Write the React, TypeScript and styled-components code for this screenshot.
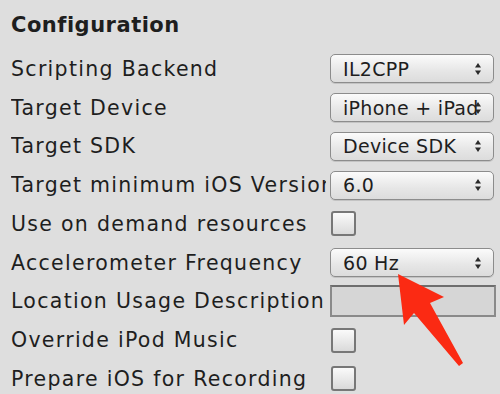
import styled, { createGlobalStyle } from "styled-components";

const GlobalStyle = createGlobalStyle`
  html, body {
    margin: 0;
    padding: 0;
    background: #dedede;
  }
  body {
    font-family: "DejaVu Sans", "Liberation Sans", sans-serif;
    color: #1e1e1e;
  }
`;

const Panel = styled.div`
  position: relative;
  width: 500px;
  height: 394px;
  overflow: hidden;
  background: #dedede;
  padding-left: 11px;
  box-sizing: border-box;
`;

const Heading = styled.div`
  height: 49.5px;
  display: flex;
  align-items: center;
  font-size: 21px;
  font-weight: bold;
  letter-spacing: 0.5px;
  padding-top: 1px;
  box-sizing: border-box;
`;

const Row = styled.div`
  height: 38.75px;
  display: grid;
  grid-template-columns: 315px 1fr;
  column-gap: 4px;
  align-items: center;
  padding-right: 6px;
`;

const Label = styled.div`
  font-size: 20.5px;
  white-space: nowrap;
  overflow: hidden;
  letter-spacing: 1.3px;
`;

const Popup = styled.div`
  position: relative;
  height: 29px;
  box-sizing: border-box;
  border: 1px solid #8c8c8c;
  border-radius: 5px;
  background: linear-gradient(#fbfbfb, #e6e6e6 60%, #dcdcdc);
  box-shadow: 0 1px 0 rgba(0, 0, 0, 0.12);
  display: flex;
  align-items: center;
  padding: 0 24px 0 12px;
  font-size: 19px;
  letter-spacing: 0.3px;
  white-space: nowrap;
  overflow: hidden;
`;

const Stepper = styled.svg`
  position: absolute;
  right: 11px;
  top: 50%;
  margin-top: -7px;
`;

const Check = styled.div`
  width: 25px;
  height: 25px;
  box-sizing: border-box;
  margin-left: 1px;
  border: 2px solid #777;
  border-radius: 3px;
  background: linear-gradient(#fafafa, #dadada);
`;

const TextField = styled.div`
  height: 32px;
  box-sizing: border-box;
  border: 2px solid #8a8a8a;
  border-top-color: #6e6e6e;
  background: #d6d6d6;
  margin-right: -2px;
`;

const Arrow = styled.svg`
  position: absolute;
  left: 0;
  top: 0;
  pointer-events: none;
`;

const Select = ({ value }: { value: string }) => (
  <Popup>
    {value}
    <Stepper width="8" height="14" viewBox="0 0 8 14">
      <path d="M4 1 L7 5.5 L1 5.5 Z" fill="#2a2a2a" />
      <path d="M4 13 L7 8.5 L1 8.5 Z" fill="#2a2a2a" />
    </Stepper>
  </Popup>
);

const App = () => {
  return (
    <>
      <GlobalStyle />
      <Panel>
        <Heading>Configuration</Heading>
        <Row>
          <Label>Scripting Backend</Label>
          <Select value="IL2CPP" />
        </Row>
        <Row>
          <Label>Target Device</Label>
          <Select value="iPhone + iPad" />
        </Row>
        <Row>
          <Label>Target SDK</Label>
          <Select value="Device SDK" />
        </Row>
        <Row>
          <Label>Target minimum iOS Version</Label>
          <Select value="6.0" />
        </Row>
        <Row>
          <Label>Use on demand resources</Label>
          <Check />
        </Row>
        <Row>
          <Label>Accelerometer Frequency</Label>
          <Select value="60 Hz" />
        </Row>
        <Row>
          <Label>Location Usage Description</Label>
          <TextField />
        </Row>
        <Row>
          <Label>Override iPod Music</Label>
          <Check />
        </Row>
        <Row>
          <Label>Prepare iOS for Recording</Label>
          <Check />
        </Row>
        <Arrow width="500" height="394" viewBox="0 0 500 394">
          <path
            d="M398 274 L444 297 L430 303 L463 363 L459 366 L414 313 L404 325 Z"
            fill="#fb2a13"
          />
        </Arrow>
      </Panel>
    </>
  );
};

export default App;
